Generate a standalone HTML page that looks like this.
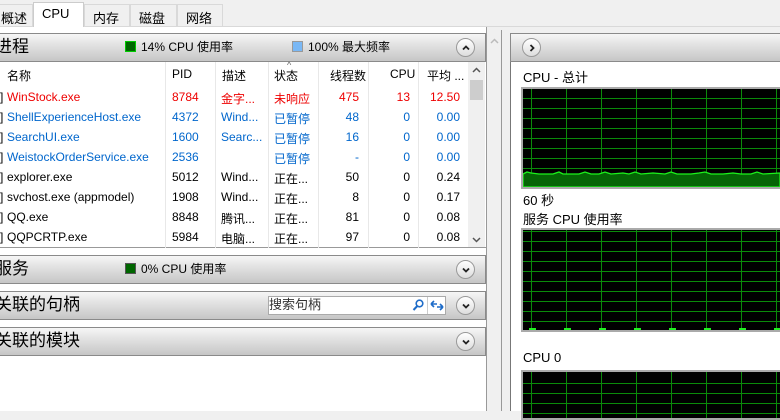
<!DOCTYPE html>
<html><head><meta charset="utf-8"><style>
*{box-sizing:border-box;margin:0;padding:0}
body{width:780px;height:411px;overflow:hidden;background:#f0f0f0;font-family:"Liberation Sans","Noto Sans CJK SC",sans-serif;font-size:12px;color:#000;position:relative}
.a{position:absolute}
.tab{position:absolute;top:4px;height:22px;border:1px solid #d9d9d9;border-bottom:none;background:#f0f0f0;font-size:13px;padding:3px 0 0 8px}
.bar{position:absolute;height:29px;border:1px solid #8a8a8a;background:linear-gradient(#f6f6f6,#e2e2e2 40%,#c6c6c6 100%);font-size:17px;line-height:25px;padding:0}
.btn{position:absolute;width:19px;height:19px;border-radius:50%;border:1px solid #999;background:linear-gradient(#fff,#ddd)}
.btn svg{position:absolute;left:4px;top:4px}
.leg{position:absolute;font-size:12px;top:0;line-height:27px}
.sq{display:inline-block;width:11px;height:11px;vertical-align:-1px;margin-right:5px;border:1px solid #555}
.row{position:absolute;left:0;width:468px;height:20px;font-size:12px}
.row span{position:absolute;top:3px;white-space:nowrap}
.r{text-align:right}
.graph{position:absolute;left:521px;width:270px;background-color:#000;border:2px solid #aaa;border-right:none;
background-image:repeating-linear-gradient(90deg,transparent 0 8px,#0a8a0a 8px 9px,transparent 9px 35px),repeating-linear-gradient(180deg,transparent 0 9px,#0a8a0a 9px 10px);background-position:0 0,0 0}
</style></head><body>
<div class="a" style="left:0;top:26px;width:780px;height:1px;background:#d9d9d9"></div>
<div class="tab" style="left:-20px;width:53px;padding-left:20px">概述</div>
<div class="tab" style="left:33px;width:51px;top:2px;height:25px;background:#fff;border-color:#ccc">CPU</div>
<div class="tab" style="left:84px;width:46px">内存</div>
<div class="tab" style="left:130px;width:47px">磁盘</div>
<div class="tab" style="left:177px;width:46px">网络</div>

<div class="a" style="left:0;top:27px;width:487px;height:384px;background:#fff;border-right:1px solid #999"></div>
<div class="bar" style="left:-6px;top:33px;width:492px">进程
<div class="leg" style="left:130px"><span class="sq" style="background:#060;border-color:#0c0"></span>14% CPU 使用率</div>
<div class="leg" style="left:297px"><span class="sq" style="background:#7ab8f5;border-color:#999"></span>100% 最大频率</div>
<div class="btn" style="left:461px;top:4px"><svg width="10" height="10"><path d="M2 6.5 L5 3.5 L8 6.5" fill="none" stroke="#222" stroke-width="1.8"/></svg></div></div>
<div class="a" style="left:0;top:62px;width:486px;height:186px;border-bottom:1px solid #999;background:#fff"></div>
<div class="a" style="left:287px;top:60px;font-size:9px;color:#666">^</div>
<div class="row" style="top:64px"><span style="left:7px">名称</span><span style="left:172px">PID</span><span style="left:222px">描述</span><span style="left:274px">状态</span><span style="left:330px">线程数</span><span style="left:390px">CPU</span><span style="left:427px">平均 ...</span></div>
<div class="a" style="left:165px;top:62px;width:1px;height:186px;background:#e8e8e8"></div>
<div class="a" style="left:215px;top:62px;width:1px;height:186px;background:#e8e8e8"></div>
<div class="a" style="left:268px;top:62px;width:1px;height:186px;background:#e8e8e8"></div>
<div class="a" style="left:318px;top:62px;width:1px;height:186px;background:#e8e8e8"></div>
<div class="a" style="left:368px;top:62px;width:1px;height:186px;background:#e8e8e8"></div>
<div class="a" style="left:418px;top:62px;width:1px;height:186px;background:#e8e8e8"></div>
<div class="a" style="left:468px;top:62px;width:17px;height:185px;background:#f0f0f0">
<svg class="a" style="left:4px;top:5px" width="9" height="6"><path d="M1 5 L4.5 1.5 L8 5" fill="none" stroke="#555" stroke-width="1.5"/></svg>
<div style="position:absolute;left:2px;top:18px;width:13px;height:20px;background:#cdcdcd"></div>
<svg class="a" style="left:4px;top:175px" width="9" height="6"><path d="M1 1 L4.5 4.5 L8 1" fill="none" stroke="#555" stroke-width="1.5"/></svg></div>
<div class="row" style="top:87px;color:#e00"><span style="left:0;color:#000">]</span><span style="left:7px">WinStock.exe</span><span style="left:172px">8784</span><span style="left:221px">金字...</span><span style="left:274px">未响应</span><span class="r" style="right:109px">475</span><span class="r" style="right:58px">13</span><span class="r" style="right:8px">12.50</span></div>
<div class="row" style="top:107px;color:#0066cc"><span style="left:0;color:#000">]</span><span style="left:7px">ShellExperienceHost.exe</span><span style="left:172px">4372</span><span style="left:221px">Wind...</span><span style="left:274px">已暂停</span><span class="r" style="right:109px">48</span><span class="r" style="right:58px">0</span><span class="r" style="right:8px">0.00</span></div>
<div class="row" style="top:127px;color:#0066cc"><span style="left:0;color:#000">]</span><span style="left:7px">SearchUI.exe</span><span style="left:172px">1600</span><span style="left:221px">Searc...</span><span style="left:274px">已暂停</span><span class="r" style="right:109px">16</span><span class="r" style="right:58px">0</span><span class="r" style="right:8px">0.00</span></div>
<div class="row" style="top:147px;color:#0066cc"><span style="left:0;color:#000">]</span><span style="left:7px">WeistockOrderService.exe</span><span style="left:172px">2536</span><span style="left:274px">已暂停</span><span class="r" style="right:109px">-</span><span class="r" style="right:58px">0</span><span class="r" style="right:8px">0.00</span></div>
<div class="row" style="top:167px"><span style="left:0">]</span><span style="left:7px">explorer.exe</span><span style="left:172px">5012</span><span style="left:221px">Wind...</span><span style="left:274px">正在...</span><span class="r" style="right:109px">50</span><span class="r" style="right:58px">0</span><span class="r" style="right:8px">0.24</span></div>
<div class="row" style="top:187px"><span style="left:0">]</span><span style="left:7px">svchost.exe (appmodel)</span><span style="left:172px">1908</span><span style="left:221px">Wind...</span><span style="left:274px">正在...</span><span class="r" style="right:109px">8</span><span class="r" style="right:58px">0</span><span class="r" style="right:8px">0.17</span></div>
<div class="row" style="top:207px"><span style="left:0">]</span><span style="left:7px">QQ.exe</span><span style="left:172px">8848</span><span style="left:221px">腾讯...</span><span style="left:274px">正在...</span><span class="r" style="right:109px">81</span><span class="r" style="right:58px">0</span><span class="r" style="right:8px">0.08</span></div>
<div class="row" style="top:227px"><span style="left:0">]</span><span style="left:7px">QQPCRTP.exe</span><span style="left:172px">5984</span><span style="left:221px">电脑...</span><span style="left:274px">正在...</span><span class="r" style="right:109px">97</span><span class="r" style="right:58px">0</span><span class="r" style="right:8px">0.08</span></div>

<div class="bar" style="left:-6px;top:255px;width:492px">服务
<div class="leg" style="left:130px"><span class="sq" style="background:#060;border-color:#555"></span>0% CPU 使用率</div>
<div class="btn" style="left:461px;top:4px"><svg width="10" height="10"><path d="M2 3.5 L5 6.5 L8 3.5" fill="none" stroke="#222" stroke-width="1.8"/></svg></div></div>
<div class="bar" style="left:-6px;top:291px;width:492px">关联的句柄
<div class="a" style="left:273px;top:4px;width:178px;height:19px;background:#fff;border:1px solid #aaa;font-size:13px;line-height:16px;color:#333">搜索句柄
<svg class="a" style="left:143px;top:2px" width="12" height="13"><circle cx="7.5" cy="4.5" r="3.3" fill="none" stroke="#1e6cc8" stroke-width="1.6"/><path d="M5.3 7 L1.5 11" stroke="#1e6cc8" stroke-width="2"/></svg>
<div class="a" style="left:158px;top:0;height:17px;border-left:1px solid #ccc"></div>
<svg class="a" style="left:161px;top:2px" width="14" height="13"><path d="M1 5 L4 2 M1 5 L4 8 M1 5 L7 5 M13 8 L10 5 M13 8 L10 11 M13 8 L7 8" stroke="#1e6cc8" stroke-width="1.6" fill="none"/></svg></div>
<div class="btn" style="left:461px;top:4px"><svg width="10" height="10"><path d="M2 3.5 L5 6.5 L8 3.5" fill="none" stroke="#222" stroke-width="1.8"/></svg></div></div>
<div class="bar" style="left:-6px;top:327px;width:492px">关联的模块
<div class="btn" style="left:461px;top:4px"><svg width="10" height="10"><path d="M2 3.5 L5 6.5 L8 3.5" fill="none" stroke="#222" stroke-width="1.8"/></svg></div></div>

<div class="a" style="left:488px;top:30px;width:14px;height:381px;background:#f0f0f0;border-right:1px solid #999">
<svg class="a" style="left:2px;top:8px" width="9" height="6"><path d="M1 5 L4.5 1.5 L8 5" fill="none" stroke="#bbb" stroke-width="1.5"/></svg></div>
<div class="a" style="left:510px;top:33px;width:270px;height:378px;background:#fff;border-left:1px solid #777"></div>
<div class="bar" style="left:510px;top:33px;width:275px"><div class="btn" style="left:11px;top:4px"><svg width="10" height="10"><path d="M3.5 2 L6.5 5 L3.5 8" fill="none" stroke="#222" stroke-width="1.8"/></svg></div></div>
<div class="a" style="left:523px;top:67px;font-size:13px">CPU - 总计</div>
<div class="graph" style="top:87px;height:102px"></div>
<svg class="a" style="left:523px;top:87px" width="257" height="100"><path d="M0 87 L4 85 L8 86 L16 87 L30 87 L36 85 L40 87 L56 87 L62 85 L68 87 L76 87 L82 85 L88 87 L100 86 L106 87 L112 85 L118 87 L130 86 L142 87 L148 85 L154 87 L168 87 L176 86 L182 85 L188 87 L200 87 L210 86 L218 87 L228 87 L234 85 L240 87 L257 86 L257 100 L0 100Z" fill="#056405" stroke="#1cf21c" stroke-width="1.3"/></svg>
<div class="a" style="left:523px;top:190px;font-size:13px">60 秒</div>
<div class="a" style="left:523px;top:209px;font-size:13px">服务 CPU 使用率</div>
<div class="graph" style="top:228px;height:104px;background-position:0 2px,0 2px"></div>
<div class="a" style="left:523px;top:328px;width:257px;height:2px;background:repeating-linear-gradient(90deg,transparent 0 6px,#2e2 6px 13px,transparent 13px 35px)"></div>
<div class="a" style="left:523px;top:350px;font-size:13px">CPU 0</div>
<div class="graph" style="top:370px;height:50px;background-position:0 2px,0 2px"></div>
</body></html>
